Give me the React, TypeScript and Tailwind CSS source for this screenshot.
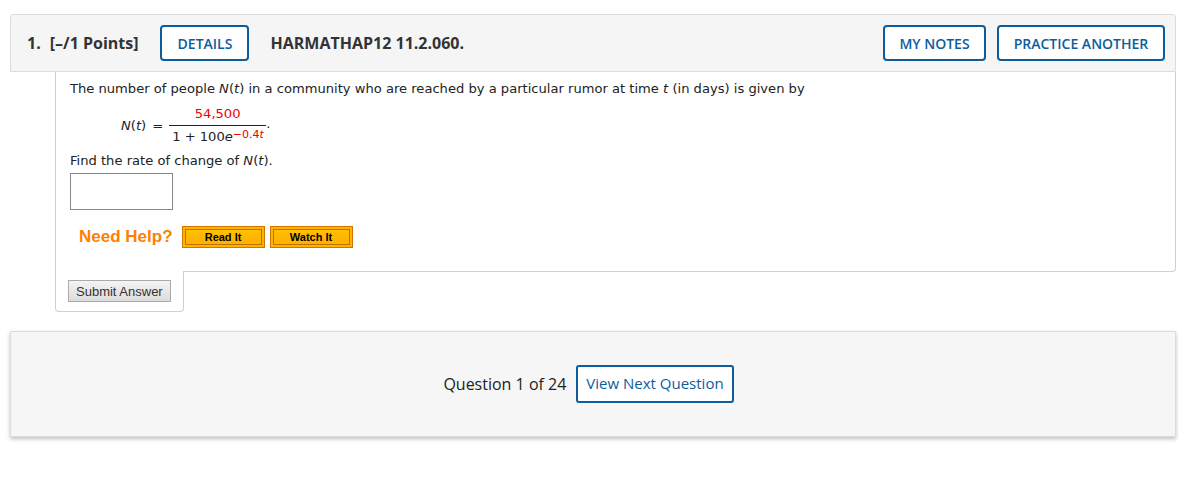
const blueBtn =
  "h-[36px] px-[14px] flex items-center rounded-[4px] border-2 border-[#0b5d9e] bg-white text-[#0b5d9e] text-[14px] font-semibold";

function HelpButton({ label }: { label: string }) {
  return (
    <div className="h-[22px] w-[83px] border border-[#d27600] bg-[#ffb300] p-[2px]">
      <div className="h-full flex items-center justify-center border border-[#c07000] bg-[linear-gradient(#ffc000,#ffb000)] text-[11px] font-bold text-black">
        {label}
      </div>
    </div>
  );
}

export default function App() {
  return (
    <div className="w-[1179px] min-h-[479px] bg-white px-[10px] pt-[14px] pr-[3px]">
      {/* question header */}
      <div className="h-[58px] flex items-center border border-[#dcdcdc] rounded-t-[3px] bg-[#f5f5f5] pl-[16px] pr-[10px] font-['Open_Sans',sans-serif] text-[#333]">
        <span className="text-[16px] font-bold">1.</span>
        <span className="ml-[9px] text-[16px] font-bold">[–/1 Points]</span>
        <button className={`${blueBtn} ml-[22px] w-[89px] justify-center`}>DETAILS</button>
        <span className="ml-[21px] text-[16px] font-bold">HARMATHAP12 11.2.060.</span>
        <div className="ml-auto flex gap-[11px]">
          <button className={`${blueBtn} w-[103px] justify-center`}>MY NOTES</button>
          <button className={`${blueBtn} w-[168px] justify-center`}>PRACTICE ANOTHER</button>
        </div>
      </div>

      {/* question body */}
      <div className="ml-[45px]">
        <div className="border-l border-r border-b border-[#cfcfcf] rounded-br-[4px] px-[14px] pt-[8px] pb-[21px] font-['DejaVu_Sans',Verdana,sans-serif] text-[13.1px] text-[#222]">
          <p className="leading-[18px]">
            The number of people <i>N</i>(<i>t</i>) in a community who are reached by a particular rumor at time <i>t</i> (in days) is given by
          </p>
          <div className="flex items-center mt-[8px] ml-[51px]">
            <span>
              <i>N</i>(<i>t</i>)
            </span>
            <span className="ml-[6px]">=</span>
            <div className="ml-[6px] flex flex-col items-center">
              <span className="text-[#e00] px-[2px] leading-[16px]">54,500</span>
              <span className="border-t border-[#222] w-[97px] mt-[3px]"></span>
              <span className="leading-[16px] mt-[3px] pl-[3px] self-start">
                1 + 100<i>e</i>
                <sup className="text-[11px] text-[#e00] relative top-[-3px]">
                  −0.4<i>t</i>
                </sup>
              </span>
            </div>
            <span className="self-start mt-[8px]">.</span>
          </div>
          <p className="mt-[7px] leading-[18px]">
            Find the rate of change of <i>N</i>(<i>t</i>).
          </p>
          <input className="mt-[3px] block w-[103px] h-[37px] border border-[#888] bg-white" />
          <div className="mt-[14px] flex items-center font-['Liberation_Sans',Arial,sans-serif]">
            <span className="ml-[9px] text-[17px] font-bold text-[#ff8000]">Need Help?</span>
            <div className="ml-[9px]">
              <HelpButton label="Read It" />
            </div>
            <div className="ml-[5px]">
              <HelpButton label="Watch It" />
            </div>
          </div>
        </div>
        <div className="relative -mt-px w-[129px] h-[41px] bg-white border-l border-r border-b border-[#cfcfcf] rounded-b-[4px] pl-[12px] pt-[7px]">
          <button className="h-[22px] px-[7px] border border-[#aaa] bg-[linear-gradient(#f4f4f4,#dcdcdc)] font-['Liberation_Sans',Arial,sans-serif] text-[13px] text-[#333]">
            Submit Answer
          </button>
        </div>
      </div>

      {/* navigation footer */}
      <div className="mt-[19px] h-[106px] flex items-center justify-center border border-[#dcdcdc] bg-[#f6f6f6] pr-[9px] shadow-[0_2px_4px_rgba(0,0,0,0.25)] font-['Open_Sans',sans-serif]">
        <span className="text-[16px] text-[#222] mr-[10px]">Question 1 of 24</span>
        <button className="h-[38px] px-[8px] rounded-[3px] border-2 border-[#0b5d9e] bg-white text-[15px] text-[#0b5d9e]">
          View Next Question
        </button>
      </div>
    </div>
  );
}
